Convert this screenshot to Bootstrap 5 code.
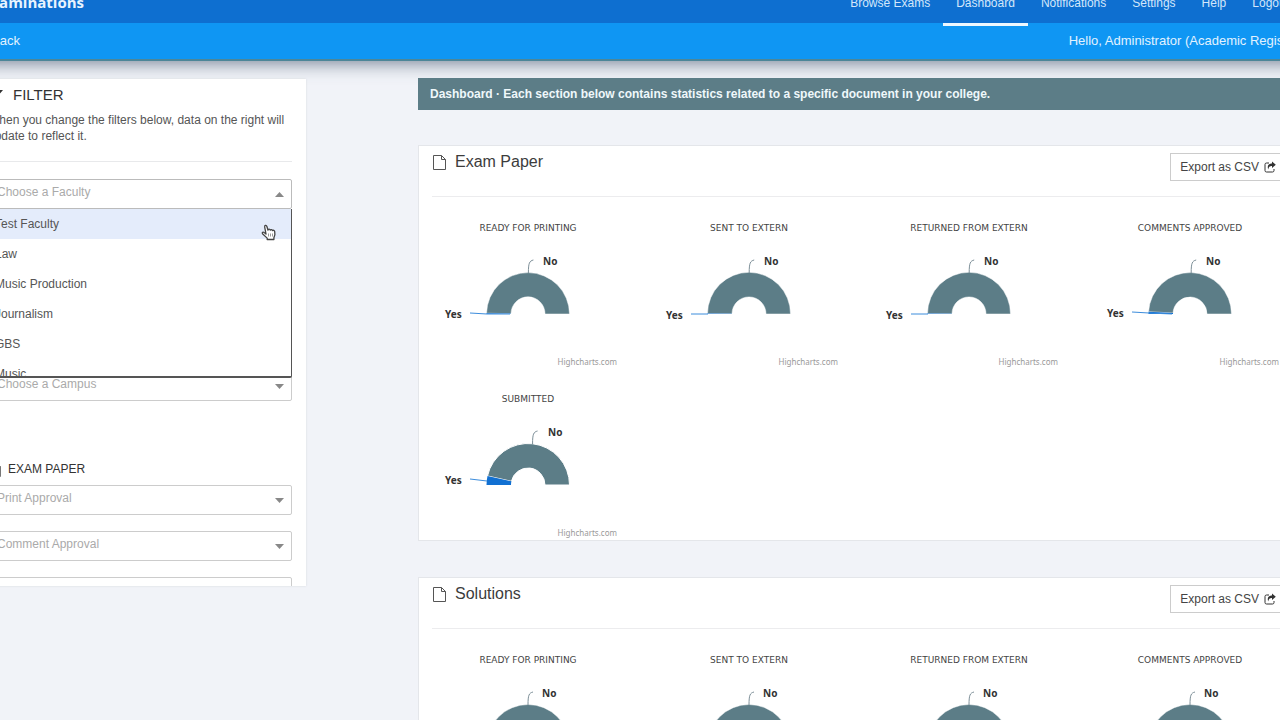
<!DOCTYPE html>
<html lang="en">
<head>
<meta charset="utf-8">
<meta name="viewport" content="width=device-width, initial-scale=1">
<title>Examinations Dashboard</title>
<link href="https://cdn.jsdelivr.net/npm/bootstrap@5.3.0/dist/css/bootstrap.min.css" rel="stylesheet">
<style>
  body { font-family: "Liberation Sans", Arial, sans-serif; font-size: 12px; line-height: 16px; color: #555; background: #f1f3f8; height: 100vh; overflow: hidden; }
  .viewport-pan { margin: 0 -40px 0 -24px; height: 100vh; overflow: hidden; }
  .top-bar { background: #0e6fd0; height: 23px; padding: 0 18px 0 6px; }
  .brand-name { font: bold 15px/20px "Open Sans", sans-serif; color: #e8f4ff; text-decoration: none; margin-top: -8px; }
  .top-bar .nav-link { color: #d3e7fb; font-size: 12px; line-height: 16px; padding: 0 13px; height: 31px; }
  .top-bar .nav-link.active { color: #d3e7fb; border-bottom: 3px solid #eef8ff; }
  .top-bar .nav { margin-top: -5px; }
  .sub-bar { background: #0f96f3; height: 38px; border-bottom: 2px solid #4c8698; padding: 0 18px 0 15px; font-size: 13px; color: #e2f2ff; box-shadow: 0 2px 18px rgba(60, 80, 105, .7); }
  .sub-bar a { color: #e2f2ff; text-decoration: none; }
  .layout { padding: 17px 20px 0 0; gap: 112px; }
  .filter-panel { width: 330px; height: calc(100vh - 213px); margin-top: 1px; padding: 8px 14px 0 12px; background: #fff; overflow: hidden; box-shadow: 0 0 2px #d5d8de; }
  .filter-title { font-size: 15px; line-height: 16px; color: #333; margin: 0; gap: 9px; }
  .filter-intro { margin: 9px 0 17px; white-space: nowrap; }
  .rule-line { height: 1px; background: #e8e9eb; }
  .filter-panel .form-select { font-size: 12px; line-height: 16px; height: 30px; padding: 4px 24px 8px 8px; color: #aaa; border: 1px solid #ccc; border-radius: 2px; box-shadow: none; background-color: #fff; background-size: 9px 5px; background-position: right 7px center;
    background-image: url("data:image/svg+xml,%3Csvg xmlns='http://www.w3.org/2000/svg' viewBox='0 0 9 5'%3E%3Cpath d='M0 0h9L4.500 5z' fill='%23888'/%3E%3C/svg%3E"); }
  .filter-panel .form-select.is-open { border-color: #bbb; background-image: url("data:image/svg+xml,%3Csvg xmlns='http://www.w3.org/2000/svg' viewBox='0 0 9 5'%3E%3Cpath d='M0 5h9L4.500 0z' fill='%23888'/%3E%3C/svg%3E"); }
  .faculty-field { margin-top: 17px; height: 192px; }
  .faculty-menu { top: 30px; left: 0; right: 0; height: 169px; overflow: hidden; background: #fff; border: 1px solid #555; border-top: 0; border-bottom-width: 2px; border-radius: 0 0 2px 2px; z-index: 5; }
  .faculty-menu button { display: block; width: 100%; height: 30px; padding: 0 6px; border: 0; background: #fff; color: #555; text-align: left; line-height: 30px; }
  .faculty-menu button.is-hovered { background: #e4ecfb; }
  .hand-pointer { top: 45px; right: 16px; z-index: 6; }
  .group-title { font-size: 12px; line-height: 16px; color: #333; margin: 60px 0 8px; gap: 7px; }
  .field-gap { margin-bottom: 16px; }
  .notice-bar { background: #5c7d87; color: #eff8fb; font-weight: bold; padding: 8px 12px; margin-bottom: 35px; }
  .stat-card { background: #fff; border: 1px solid #e4e6ea; margin-bottom: 36px; }
  .stat-head { margin: 0 13px; height: 51px; border-bottom: 1px solid #ececee; padding-top: 7px; }
  .stat-title { font-size: 16px; line-height: 18px; color: #3c3c3c; gap: 9px; margin: 0; padding-left: 1px; }
  .btn-export { font-size: 12px; line-height: 16px; padding: 5px 9px; border: 1px solid #ccc; border-radius: 0; color: #444; background: #fff; gap: 5px; }
  .chart-area { margin: 0 -1px; padding-top: 1px; }
  .chart-area svg { display: block; margin: 0 auto; overflow: visible; }
  .chart-text { font-family: "Noto Sans", sans-serif; }
  .chart-name { font-family: "DejaVu Sans", sans-serif; }
</style>
</head>
<body>
<div class="viewport-pan">
  <header>
    <div class="top-bar d-flex justify-content-between align-items-start position-relative z-1">
      <a class="brand-name" href="#">Examinations</a>
      <nav class="nav flex-nowrap">
        <a class="nav-link" href="#">Browse Exams</a>
        <a class="nav-link active" href="#">Dashboard</a>
        <a class="nav-link" href="#">Notifications</a>
        <a class="nav-link" href="#">Settings</a>
        <a class="nav-link" href="#">Help</a>
        <a class="nav-link" href="#">Logout</a>
      </nav>
    </div>
    <div class="sub-bar d-flex justify-content-between align-items-center">
      <a href="#">Back</a>
      <span>Hello, Administrator (Academic Registry)</span>
    </div>
  </header>

  <div class="layout d-flex align-items-start">
    <aside class="filter-panel flex-shrink-0">
      <h1 class="filter-title d-flex align-items-center">
        <svg width="16" height="12" viewBox="0 0 16 12" fill="#333"><path d="M1 1h14l-5 6v5H6V7z"/></svg>
        FILTER
      </h1>
      <p class="filter-intro">When you change the filters below, data on the right will<br>update to reflect it.</p>
      <div class="rule-line"></div>
      <div class="faculty-field position-relative">
        <select class="form-select is-open" aria-label="Faculty"><option>Choose a Faculty</option></select>
        <div class="faculty-menu position-absolute">
          <button type="button" class="is-hovered">Test Faculty</button>
          <button type="button">Law</button>
          <button type="button">Music Production</button>
          <button type="button">Journalism</button>
          <button type="button">GBS</button>
          <button type="button">Music</button>
        </div>
        <svg class="hand-pointer position-absolute" width="15" height="17" viewBox="0 0 15 17" fill="#fff" stroke="#444" stroke-width="1.300" stroke-linejoin="round"><path d="M5 10 3.700 3.200C3.300 1.300 5.300.7 5.900 2.500L7 6.200c.2-1.400 2-1.300 2.300 0 .4-1 2-.8 2.200.4.700-.7 2-.2 2.200 1l.2 3-1 3.200v1.700H6.200v-1.400L1.500 9.700c-.8-1.300.6-2.200 1.700-1.200z"/><path d="M7.500 9.500v3m2-3v3m2-3v3" stroke="#999" stroke-width="1"/></svg>
      </div>
      <select class="form-select" aria-label="Campus"><option>Choose a Campus</option></select>
      <h2 class="group-title d-flex align-items-center">
        <svg width="13" height="15" viewBox="0 0 13 15" fill="none" stroke="#777"><path d="M.5.500h8l4 4v10H.5zM8.500.500v4h4"/></svg>
        EXAM PAPER
      </h2>
      <select class="form-select field-gap" aria-label="Print approval"><option>Print Approval</option></select>
      <select class="form-select field-gap" aria-label="Comment approval"><option>Comment Approval</option></select>
      <select class="form-select" aria-label="More filters"><option></option></select>
    </aside>

    <main class="flex-grow-1">
      <div class="notice-bar">Dashboard · Each section below contains statistics related to a specific document in your college.</div>

      <section class="stat-card">
        <div class="stat-head d-flex justify-content-between align-items-start">
          <h2 class="stat-title d-flex align-items-center">
            <svg width="13" height="15" viewBox="0 0 13 15" fill="none" stroke="#555"><path d="M.5.500h8l4 4v10H.5zM8.500.500v4h4"/></svg>
            Exam Paper
          </h2>
          <button type="button" class="btn btn-export d-flex align-items-center">Export as CSV
            <svg width="12" height="12" viewBox="0 0 12 12" fill="none" stroke="#333"><path d="M5 2H2.500Q1 2 1 3.500v6Q1 11 2.500 11h6Q10 11 10 9.500V8"/><path d="M8 .5 11.800 3.800 8 7V5C5.500 5 4.500 6 4.300 8.500 2.800 5 4.500 2.500 8 2.500z" fill="#333" stroke="none"/></svg>
          </button>
        </div>
        <div class="chart-area row g-0" data-set="exam"></div>
      </section>

      <section class="stat-card">
        <div class="stat-head d-flex justify-content-between align-items-start">
          <h2 class="stat-title d-flex align-items-center">
            <svg width="13" height="15" viewBox="0 0 13 15" fill="none" stroke="#555"><path d="M.5.500h8l4 4v10H.5zM8.500.500v4h4"/></svg>
            Solutions
          </h2>
          <button type="button" class="btn btn-export d-flex align-items-center">Export as CSV
            <svg width="12" height="12" viewBox="0 0 12 12" fill="none" stroke="#333"><path d="M5 2H2.500Q1 2 1 3.500v6Q1 11 2.500 11h6Q10 11 10 9.500V8"/><path d="M8 .5 11.800 3.800 8 7V5C5.500 5 4.500 6 4.300 8.500 2.800 5 4.500 2.500 8 2.500z" fill="#333" stroke="none"/></svg>
          </button>
        </div>
        <div class="chart-area row g-0" data-set="solutions"></div>
      </section>
    </main>
  </div>
</div>

<script src="https://cdn.jsdelivr.net/npm/bootstrap@5.3.0/dist/js/bootstrap.bundle.min.js"></script>
<script>
  // Each entry: title and the share of "Yes" in the half-donut.
  const sets = {
    exam: [["READY FOR PRINTING", .006], ["SENT TO EXTERN", .003], ["RETURNED FROM EXTERN", .003], ["COMMENTS APPROVED", .018], ["SUBMITTED", .07]],
    solutions: [["READY FOR PRINTING", 0], ["SENT TO EXTERN", 0], ["RETURNED FROM EXTERN", 0], ["COMMENTS APPROVED", 0]]
  };
  const cx = 98, cy = 116, R = 41.5, r = 17;
  const at = (t, rad) => (cx - rad * Math.cos(Math.PI * t)).toFixed(2) + " " + (cy - rad * Math.sin(Math.PI * t)).toFixed(2);
  const slice = (a, b) => `M${at(a, R)}A${R} ${R} 0 0 1 ${at(b, R)}L${at(b, r)}A${r} ${r} 0 0 0 ${at(a, r)}Z`;

  function chart([title, yes]) {
    const mid = (1 + yes) / 2, nx = cx - R * Math.cos(Math.PI * mid);
    const big = yes > .05;
    const yy = big ? 110 : yes > .01 ? 114 : yes > .005 ? 115 : 116;
    const tail = big ? "L57 112" : yes > .005 ? `L57 ${yy + 1}L80 116` : "L57 116";
    const yesMarks = yes ? `<path d="${slice(0, yes)}" fill="#1170d2"/>
      <path d="M40 ${yy}${tail}" fill="none" stroke="#3d8ddc"/>
      <text x="15" y="${yy + 5}" font-size="10" font-weight="bold" fill="#333">Yes</text>` : "";
    return `<div class="col-3"><svg class="chart-text" width="196" height="171" viewBox="0 0 196 171" role="img" aria-label="${title}">
      <text class="chart-name" x="98" y="33" font-size="9" text-anchor="middle" fill="#444">${title}</text>
      <path d="${slice(yes, 1)}" fill="#5c7d87" stroke="#fff" stroke-width="${big ? 1 : .5}"/>
      ${yesMarks}
      <path d="M${nx} 75C${nx} 65 ${nx + 1} 63 ${nx + 5} 62" fill="none" stroke="#7d8f98"/>
      <text x="${Math.round(nx + (yes ? 15 : 14))}" y="67" font-size="10" font-weight="bold" fill="#333">No</text>
      <text x="187" y="167" font-size="8" text-anchor="end" fill="#999">Highcharts.com</text></svg></div>`;
  }
  document.querySelectorAll("[data-set]").forEach(el => el.innerHTML = sets[el.dataset.set].map(chart).join(""));
</script>
</body>
</html>
